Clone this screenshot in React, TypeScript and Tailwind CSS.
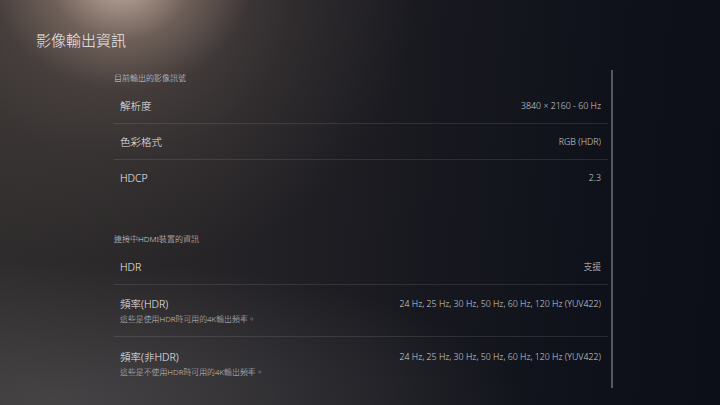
import React from "react";

type Row = {
  label: string;
  value: string;
  note?: string;
};

const videoRows: Row[] = [
  { label: "解析度", value: "3840 × 2160 - 60 Hz" },
  { label: "色彩格式", value: "RGB (HDR)" },
  { label: "HDCP", value: "2.3" },
];

const hdmiRows: Row[] = [
  { label: "HDR", value: "支援" },
  {
    label: "頻率(HDR)",
    value: "24 Hz, 25 Hz, 30 Hz, 50 Hz, 60 Hz, 120 Hz (YUV422)",
    note: "這些是使用HDR時可用的4K輸出頻率。",
  },
  {
    label: "頻率(非HDR)",
    value: "24 Hz, 25 Hz, 30 Hz, 50 Hz, 60 Hz, 120 Hz (YUV422)",
    note: "這些是不使用HDR時可用的4K輸出頻率。",
  },
];

function InfoRow({ row, last }: { row: Row; last: boolean }) {
  return (
    <div
      className={`flex flex-col justify-center px-[6px] pr-[7px] ${
        row.note ? "h-[52px]" : "h-[36px]"
      } ${last ? "" : "border-b border-white/10"}`}
    >
      <div className="flex items-center justify-between">
        <span className="text-[10.5px] leading-[16px] text-[#ececee]">{row.label}</span>
        <span className="text-[8.8px] leading-[16px] text-[#cfcfd2]">{row.value}</span>
      </div>
      {row.note && (
        <div className="text-[7.9px] leading-[12px] mt-[1px] text-[#c2c2c5]">{row.note}</div>
      )}
    </div>
  );
}

function Section({ title, rows }: { title: string; rows: Row[] }) {
  return (
    <div>
      <div className="h-[20px] flex items-center text-[8px] text-[#d8d8da]">{title}</div>
      {rows.map((r, i) => (
        <InfoRow key={r.label} row={r} last={i === rows.length - 1} />
      ))}
    </div>
  );
}

export default function App() {
  return (
    <div
      className="relative w-[720px] h-[405px] overflow-hidden font-light bg-[#10131b] bg-[radial-gradient(ellipse_130px_110px_at_122px_-20px,rgba(220,195,180,0.8),rgba(170,145,130,0.35)_55%,transparent_100%),radial-gradient(ellipse_300px_280px_at_115px_-10px,rgba(135,115,105,0.5),rgba(90,78,74,0.25)_60%,transparent_100%),radial-gradient(ellipse_460px_140px_at_60px_400px,rgba(90,88,90,0.55),transparent_100%),linear-gradient(95deg,#302d2d_0%,#262427_30%,#17181f_60%,#0e111a_85%,#0c0f18_100%)]"
      style={{ fontFamily: '"Noto Sans", "Noto Sans CJK TC", sans-serif' }}
    >
      <div className="pl-[36px] pt-[29px]">
        <h1 className="text-[15px] leading-[22px] text-[#ececee] font-light">影像輸出資訊</h1>
      </div>
      <div className="flex mt-[17px] ml-[114px] w-[499px] h-[322px]">
        <div className="flex-1">
          <Section title="目前輸出的影像訊號" rows={videoRows} />
          <div className="mt-[33px]">
            <Section title="連接中HDMI裝置的資訊" rows={hdmiRows} />
          </div>
        </div>
        <div className="w-[2px] ml-[3px] my-[2px] bg-[#55585f]" />
      </div>
    </div>
  );
}
